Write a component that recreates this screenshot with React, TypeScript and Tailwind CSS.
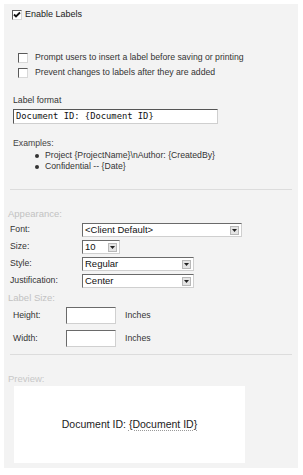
import React from "react";

const font = "font-['Tahoma','Liberation_Sans',sans-serif]";

const CheckBox = ({ checked }: { checked?: boolean }) => (
  <span className="w-[10px] h-[10px] bg-white border border-t-[#5a5a5a] border-l-[#5a5a5a] border-r-[#d8d8d8] border-b-[#d8d8d8] flex items-center justify-center shrink-0">
    {checked && (
      <svg width="8" height="8" viewBox="0 0 8 8">
        <path d="M1 3.5 L3 5.5 L7 1.5" stroke="#111" strokeWidth="1.8" fill="none" />
      </svg>
    )}
  </span>
);

const Select = ({ value, width }: { value: string; width: string }) => (
  <div
    className={`${width} h-[14px] bg-white border border-t-[#6a6a6a] border-l-[#6a6a6a] border-r-[#cfcfcf] border-b-[#cfcfcf] flex items-center justify-between pl-[2px] pr-[2px]`}
  >
    <span className="font-['Liberation_Sans',sans-serif] text-[9.5px] text-[#111] leading-none">
      {value}
    </span>
    <span className="w-[9px] h-[9px] bg-[#e4e4e4] border border-[#b8b8b8] flex items-center justify-center">
      <svg width="5" height="3" viewBox="0 0 5 3">
        <path d="M0 0 H5 L2.5 3 Z" fill="#222" />
      </svg>
    </span>
  </div>
);

const Row = ({ label, children }: { label: string; children: React.ReactNode }) => (
  <div className="flex items-center h-[14px] mt-[3px]">
    <span className="w-[78px] pl-[6px] text-[#333]">{label}</span>
    {children}
  </div>
);

export default function App() {
  return (
    <div className={`w-[303px] h-[475px] bg-white pt-[4px] pl-[4px] ${font} text-[8.7px]`}>
      <div className="w-[294px] h-[464px] bg-[#f3f3f3] flex flex-col">
        <div className="flex items-center gap-[3px] h-[14px] mt-[4px] pl-[8px] text-[#222] text-[9px]">
          <CheckBox checked />
          <span>Enable Labels</span>
        </div>

        <div className="flex items-center gap-[7px] h-[14px] mt-[29px] pl-[14px] text-[#333]">
          <CheckBox />
          <span>Prompt users to insert a label before saving or printing</span>
        </div>
        <div className="flex items-center gap-[7px] h-[14px] mt-[1px] pl-[14px] text-[#333]">
          <CheckBox />
          <span>Prevent changes to labels after they are added</span>
        </div>

        <div className="h-[12px] mt-[15px] pl-[9px] text-[#333] flex items-center">Label format</div>
        <div className="ml-[9px] mt-[2px] w-[205px] h-[15px] bg-white border border-t-[#555] border-l-[#555] border-r-[#cfcfcf] border-b-[#cfcfcf] flex items-center pl-[2px] font-['DejaVu_Sans_Mono',monospace] text-[8.8px] text-[#111]">
          Document ID: {"{Document ID}"}
        </div>

        <div className="h-[12px] mt-[14px] pl-[9px] text-[#444] flex items-center">Examples:</div>
        <ul className="mt-[0px] pl-[31px] text-[#333]">
          <li className="flex items-center h-[11px] gap-[6px]">
            <span className="w-[4px] h-[4px] rounded-full bg-[#333]" />
            <span>Project {"{ProjectName}"}\nAuthor: {"{CreatedBy}"}</span>
          </li>
          <li className="flex items-center h-[11px] gap-[6px]">
            <span className="w-[4px] h-[4px] rounded-full bg-[#333]" />
            <span>Confidential -- {"{Date}"}</span>
          </li>
        </ul>

        <div className="mx-[6px] mt-[17px] h-px bg-[#dcdcdc]" />

        <div className="h-[12px] mt-[18px] pl-[4px] text-[#c2c2c2] text-[9.5px] flex items-center">Appearance:</div>
        <Row label="Font:">
          <Select value="<Client Default>" width="w-[160px]" />
        </Row>
        <Row label="Size:">
          <Select value="10" width="w-[38px]" />
        </Row>
        <Row label="Style:">
          <Select value="Regular" width="w-[112px]" />
        </Row>
        <Row label="Justification:">
          <Select value="Center" width="w-[112px]" />
        </Row>

        <div className="h-[12px] mt-[4px] pl-[4px] text-[#c2c2c2] text-[9.5px] flex items-center">Label Size:</div>
        <div className="flex items-center h-[17px] mt-[3px] pl-[9px] text-[#333]">
          <span className="w-[53px]">Height:</span>
          <span className="w-[50px] h-[17px] bg-white border border-t-[#6a6a6a] border-l-[#6a6a6a] border-r-[#d0d0d0] border-b-[#d0d0d0]" />
          <span className="ml-[9px]">Inches</span>
        </div>
        <div className="flex items-center h-[17px] mt-[6px] pl-[9px] text-[#333]">
          <span className="w-[53px]">Width:</span>
          <span className="w-[50px] h-[17px] bg-white border border-t-[#6a6a6a] border-l-[#6a6a6a] border-r-[#d0d0d0] border-b-[#d0d0d0]" />
          <span className="ml-[9px]">Inches</span>
        </div>

        <div className="mx-[6px] mt-[7px] h-px bg-[#dcdcdc]" />

        <div className="h-[12px] mt-[18px] pl-[4px] text-[#c8c8c8] text-[9.5px] flex items-center">Preview:</div>
        <div className="ml-[10px] mt-[1px] w-[231px] h-[77px] bg-white flex items-center justify-center text-[10.5px] text-[#222]">
          <span>
            Document ID:{" "}
            <span className="underline decoration-dotted decoration-[#999] underline-offset-2">
              {"{Document ID}"}
            </span>
          </span>
        </div>
      </div>
    </div>
  );
}
